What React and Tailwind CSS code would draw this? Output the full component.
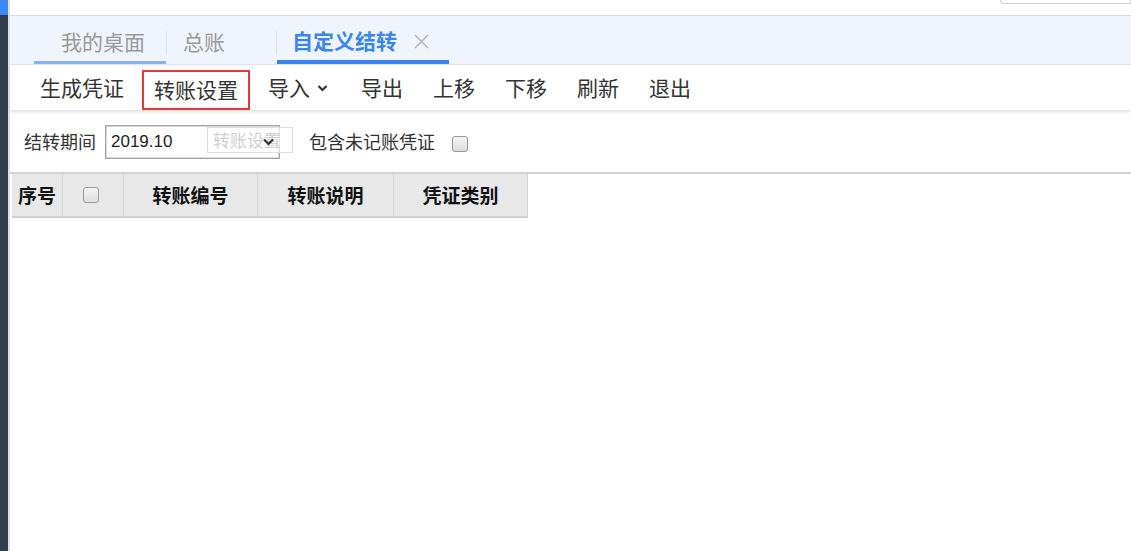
import React from 'react';

const font = { fontFamily: '"Noto Sans CJK SC", "Microsoft YaHei", sans-serif' };

const tools = ['导出', '上移', '下移', '刷新', '退出'];

const cols = [
    { label: '序号', w: 'w-[51px]' },
    { label: null, w: 'w-[61px]' },
    { label: '转账编号', w: 'w-[134px]' },
    { label: '转账说明', w: 'w-[136px]' },
    { label: '凭证类别', w: 'w-[134px]' },
];

const Checkbox = () => (
    <span className="inline-block w-[16px] h-[16px] rounded-[3px] border border-[#9a9a9a] bg-gradient-to-b from-[#f4f4f4] to-[#dedede]" />
);

const App = () => {
    return (
        <div className="flex w-[1131px] h-[551px] overflow-hidden bg-white text-[#333]" style={font}>
            {/* left dark strip */}
            <div className="w-[8px] flex flex-col shrink-0">
                <div className="h-[15px] bg-[#3d8af2]" />
                <div className="flex-1 bg-[#323e4c]" />
            </div>

            <div className="flex-1 flex flex-col border-l-2 border-[#dde1e6] min-w-0">
                {/* top bar */}
                <div className="h-[16px] bg-white border-b border-[#dcdcdc] flex justify-end shrink-0">
                    <div className="w-[131px] h-[4px] border border-t-0 border-[#cfcfcf] rounded-bl-[4px]" />
                </div>

                {/* tabs */}
                <div className="h-[49px] bg-[#f0f5fd] border-b border-[#e2e6ec] flex items-end pl-[24px] shrink-0">
                    <div className="w-[132px] h-full flex flex-col">
                        <div className="flex-1 flex items-center justify-center text-[21px] text-[#999] pl-[6px] pt-[6px]">我的桌面</div>
                        <div className="h-[3px] bg-[#86b3f0]" />
                    </div>
                    <div className="w-px h-[24px] bg-[#dfe4ea] self-center mt-[6px]" />
                    <div className="w-[109px] h-full flex items-center pl-[16px] text-[21px] text-[#999] pt-[3px]">总账</div>
                    <div className="w-px h-[24px] bg-[#dfe4ea] self-center mt-[6px]" />
                    <div className="w-[172px] h-full flex flex-col">
                        <div className="flex-1 flex items-center pl-[15px] gap-[16px] pt-[6px]">
                            <span className="text-[21px] font-bold text-[#3a86ee]">自定义结转</span>
                            <svg width="17" height="17" viewBox="0 0 17 17" className="mt-[1px]">
                                <path d="M2 2 L15 15 M15 2 L2 15" stroke="#b8b8b8" strokeWidth="1.6" />
                            </svg>
                        </div>
                        <div className="h-[4px] bg-[#3a86ee]" />
                    </div>
                </div>

                {/* toolbar */}
                <div className="h-[45px] bg-white flex items-stretch pl-[30px] gap-[30px] shadow-[0_2px_3px_rgba(0,0,0,0.12)] relative z-10 shrink-0 text-[21px] text-[#333]">
                    <span className="flex items-center">生成凭证</span>
                    <span className="flex items-center -mx-[12px] px-[10px] mt-[5px] border-2 border-[#e03a3a]">转账设置</span>
                    <span className="flex items-center gap-[7px] pr-[3px]">
                        导入
                        <svg width="11" height="10" viewBox="0 0 11 10">
                            <path d="M1.5 3 L5.5 7 L9.5 3" stroke="#333" strokeWidth="2.2" fill="none" />
                        </svg>
                    </span>
                    {tools.map(t => (
                        <span key={t} className="flex items-center">{t}</span>
                    ))}
                </div>

                {/* filter row */}
                <div className="h-[62px] flex items-center pl-[14px] shrink-0">
                    <span className="text-[18px] text-[#333]">结转期间</span>
                    <div className="relative ml-[9px] w-[175px] h-[34px] border border-[#a6a6a6] shadow-[inset_0_0_0_1px_#d8d8d8] flex items-center pl-[5px] mt-[2px]">
                        <span className="text-[17px] text-[#222]" style={{ fontFamily: '"Liberation Sans", Arial, sans-serif' }}>2019.10</span>
                        <div className="absolute left-[101px] top-[1px] w-[86px] h-[26px] border border-[#dedede] bg-white/70 flex items-center pl-[5px] text-[17px] text-[#cfcfcf]">
                            转账设置
                        </div>
                        <svg className="absolute left-[156px] top-[11px]" width="13" height="10" viewBox="0 0 13 10">
                            <path d="M2 2.5 L6.5 7 L11 2.5" stroke="#333" strokeWidth="2.2" fill="none" />
                        </svg>
                    </div>
                    <span className="ml-[29px] text-[18px] text-[#333]">包含未记账凭证</span>
                    <span className="ml-[17px] mt-[6px] flex"><Checkbox /></span>
                </div>

                {/* table */}
                <div className="border-t-2 border-[#d4d4d4] pl-[2px] flex-1">
                    <div className="flex h-[44px] w-fit bg-[#e8e8e8] border-b-2 border-[#d0d0d0]">
                        {cols.map((c, i) => (
                            <div
                                key={i}
                                className={`${c.w} flex items-center justify-center border-r border-[#d6d6d6] text-[19px] font-bold text-[#111]`}
                            >
                                {c.label ? c.label : <span className="flex mr-[4px]"><Checkbox /></span>}
                            </div>
                        ))}
                    </div>
                </div>
            </div>
        </div>
    );
};

export default App;
